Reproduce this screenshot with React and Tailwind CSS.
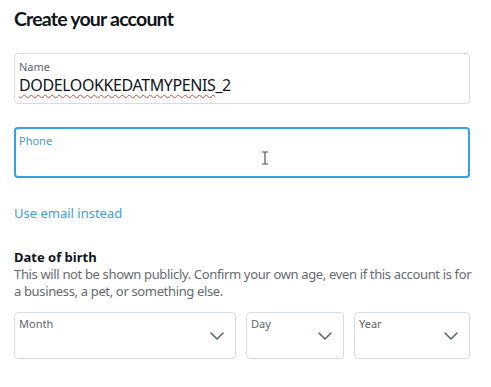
import React from "react";

const Chevron = () => (
  <svg width="18" height="18" viewBox="0 0 24 24" fill="none" stroke="#536471" strokeWidth="2" strokeLinecap="round" strokeLinejoin="round">
    <path d="M4 8l8 8 8-8" />
  </svg>
);

const SelectBox = ({ label, className }) => (
  <div className={`relative h-[47px] rounded border border-[#d6dde1] bg-white ${className}`}>
    <p className="absolute left-[4px] top-[3px] text-[11px] text-[#5b6670]">{label}</p>
    <div className="absolute right-[9px] top-[14px]">
      <Chevron />
    </div>
  </div>
);

export default function App() {
  return (
    <div className="w-[491px] h-[387px] bg-white overflow-hidden px-[14px] pt-[6px] font-['Segoe_UI','Noto_Sans',sans-serif] text-[#0f1419]">
      <h1 className="font-['Lato',sans-serif] text-[19.5px] font-bold leading-[26px] tracking-[-0.8px]">Create your account</h1>

      {/* Name */}
      <div className="mt-[21px] h-[51px] w-[456px] rounded border border-[#d6dde1] px-[4px] pt-[6px]">
        <p className="text-[11px] leading-[14px] text-[#5b6670]">Name</p>
        <p className="text-[16px] leading-[24px] mt-[-1px] tracking-[-0.4px]">
          <span className="underline decoration-wavy decoration-[#e0443a] decoration-1 underline-offset-[3px]">DODELOOKKEDATMYPENIS</span>_2
        </p>
      </div>

      {/* Phone */}
      <div className="relative mt-[23px] h-[51px] w-[456px] rounded border-2 border-[#37a0e0] px-[3px] pt-[5px]">
        <p className="text-[11px] leading-[14px] text-[#37a0e0]">Phone</p>
        <svg className="absolute left-[245px] top-[22px]" width="8" height="14" viewBox="0 0 8 14" fill="none" stroke="#555" strokeWidth="1.2">
          <path d="M1 1h6M1 13h6M4 1v12" />
        </svg>
      </div>

      <p className="mt-[26px] text-[13px] leading-[18px] text-[#3ca0d8]">Use email instead</p>

      <p className="mt-[27px] text-[13px] font-bold leading-[17px]">Date of birth</p>
      <p className="text-[13px] leading-[17px] text-[#636b72] w-[460px] tracking-[-0.35px]">
        This will not be shown publicly. Confirm your own age, even if this account is for a business, a pet, or something else.
      </p>

      <div className="mt-[12px] flex gap-[10px] w-[456px]">
        <SelectBox label="Month" className="w-[222px]" />
        <SelectBox label="Day" className="w-[98px]" />
        <SelectBox label="Year" className="w-[116px]" />
      </div>
    </div>
  );
}
